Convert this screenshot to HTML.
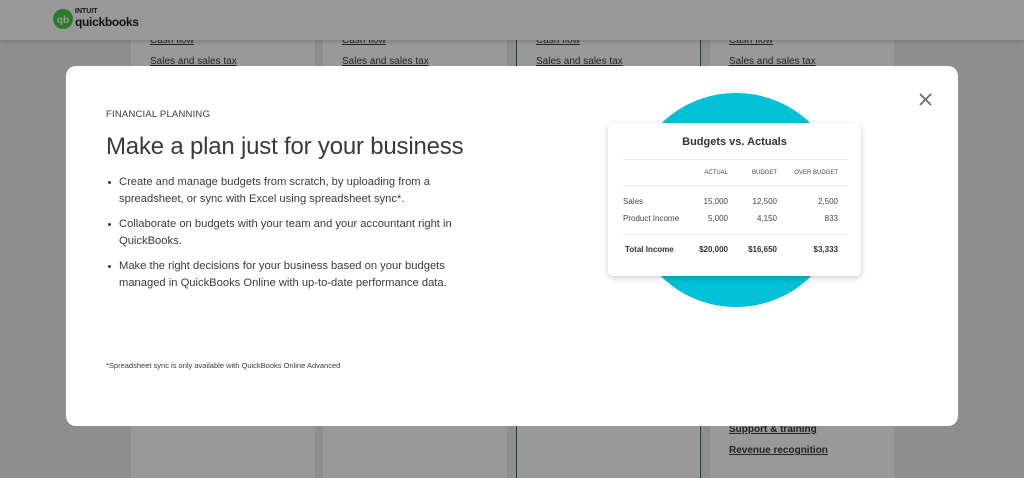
<!DOCTYPE html>
<html><head><style>
*{margin:0;padding:0;box-sizing:border-box}
body{width:1024px;height:478px;overflow:hidden;background:#8e8e8e;font-family:"Liberation Sans",sans-serif;position:relative}
.hdr{position:absolute;left:0;top:0;width:1024px;height:40px;background:#999;box-shadow:0 2px 4px rgba(0,0,0,.15);z-index:2}
.card{position:absolute;top:40px;height:438px;width:184px;background:#999}
.card a{position:absolute;left:19px;font-size:10px;color:#222;text-decoration:underline}
.modal{position:absolute;left:66px;top:66px;width:892px;height:360px;background:#fff;border-radius:10px;z-index:3}
.t{position:absolute;color:#393a3d}
ul{list-style:none}
li{position:relative;padding-left:13px;font-size:11.2px;line-height:17px;color:#393a3d;margin-bottom:8px}
li:before{content:"";position:absolute;left:2px;top:7px;width:3px;height:3px;border-radius:50%;background:#393a3d}
.tbl{position:absolute;left:542px;top:57px;width:253px;height:153px;background:#fff;border-radius:5px;box-shadow:0 2px 6px rgba(0,0,0,.2)}
.tbl div{position:absolute;font-size:8px;color:#444}
.r{text-align:right}
</style></head><body>
<div class="hdr">
<svg style="position:absolute;left:53px;top:9px" width="20" height="20"><circle cx="10" cy="10" r="10" fill="#2a7a2a"/><text x="10" y="14" font-size="10" font-family="Liberation Sans" fill="#999" text-anchor="middle" font-weight="bold">qb</text></svg>
<div style="position:absolute;left:75px;top:8px;font-size:7px;font-weight:bold;color:#111">INTUIT</div>
<div style="position:absolute;left:75px;top:15px;font-size:12px;font-weight:bold;color:#111;letter-spacing:-.3px">quickbooks</div>
</div>
<div class="card" style="left:131px"><a style="top:-5px">Cash flow</a><a style="top:16px">Sales and sales tax</a></div>
<div class="card" style="left:323px"><a style="top:-5px">Cash flow</a><a style="top:16px">Sales and sales tax</a></div>
<div class="card" style="left:516px;border-left:1px solid #1d3a40;border-right:1px solid #1d3a40;width:185px"><a style="top:-5px">Cash flow</a><a style="top:16px">Sales and sales tax</a></div>
<div class="card" style="left:710px"><a style="top:-5px">Cash flow</a><a style="top:16px">Sales and sales tax</a><a style="top:384px;font-weight:bold">Support &amp; training</a><a style="top:405px;font-weight:bold">Revenue recognition</a></div>
<div class="modal">
<div class="t" style="left:40px;top:43px;font-size:9.5px;letter-spacing:.2px">FINANCIAL PLANNING</div>
<div class="t" style="left:40px;top:67px;font-size:24px;letter-spacing:-.2px">Make a plan just for your business</div>
<ul style="position:absolute;left:40px;top:108px;width:365px">
<li>Create and manage budgets from scratch, by uploading from a spreadsheet, or sync with Excel using spreadsheet sync*.</li>
<li>Collaborate on budgets with your team and your accountant right in QuickBooks.</li>
<li>Make the right decisions for your business based on your budgets managed in QuickBooks Online with up-to-date performance data.</li>
</ul>
<div class="t" style="left:40px;top:295px;font-size:7.5px">*Spreadsheet sync is only available with QuickBooks Online Advanced</div>
<svg style="position:absolute;left:853px;top:27px" width="13" height="13"><path d="M1 1L12 12M12 1L1 12" stroke="#6b6c72" stroke-width="1.8"/></svg>
<div style="position:absolute;left:563px;top:27px;width:214px;height:214px;border-radius:50%;background:#00c1d5"></div>
<div class="tbl">
<div style="left:0;width:253px;top:13px;text-align:center;font-size:11px;font-weight:bold;color:#333">Budgets vs. Actuals</div>
<div style="left:15px;width:225px;top:36px;height:1px;background:#e6e6e6"></div>
<div style="left:15px;width:225px;top:62px;height:1px;background:#e6e6e6"></div>
<div style="left:15px;width:225px;top:111px;height:1px;background:#e6e6e6"></div>
<div class="r" style="left:70px;width:50px;top:47px;font-size:6px">ACTUAL</div>
<div class="r" style="left:120px;width:49px;top:47px;font-size:6px">BUDGET</div>
<div class="r" style="left:170px;width:60px;top:47px;font-size:6px">OVER BUDGET</div>
<div style="left:15px;top:74px">Sales</div>
<div style="left:15px;top:91px">Product Income</div>
<div class="r" style="left:70px;width:50px;top:74px">15,000</div>
<div class="r" style="left:120px;width:49px;top:74px">12,500</div>
<div class="r" style="left:170px;width:60px;top:74px">2,500</div>
<div class="r" style="left:70px;width:50px;top:91px">5,000</div>
<div class="r" style="left:120px;width:49px;top:91px">4,150</div>
<div class="r" style="left:170px;width:60px;top:91px">833</div>
<div style="left:17px;top:122px;font-weight:bold;color:#333">Total Income</div>
<div class="r" style="left:70px;width:50px;top:122px;font-weight:bold;color:#333">$20,000</div>
<div class="r" style="left:120px;width:49px;top:122px;font-weight:bold;color:#333">$16,650</div>
<div class="r" style="left:170px;width:60px;top:122px;font-weight:bold;color:#333">$3,333</div>
</div>
</div>
</body></html>
